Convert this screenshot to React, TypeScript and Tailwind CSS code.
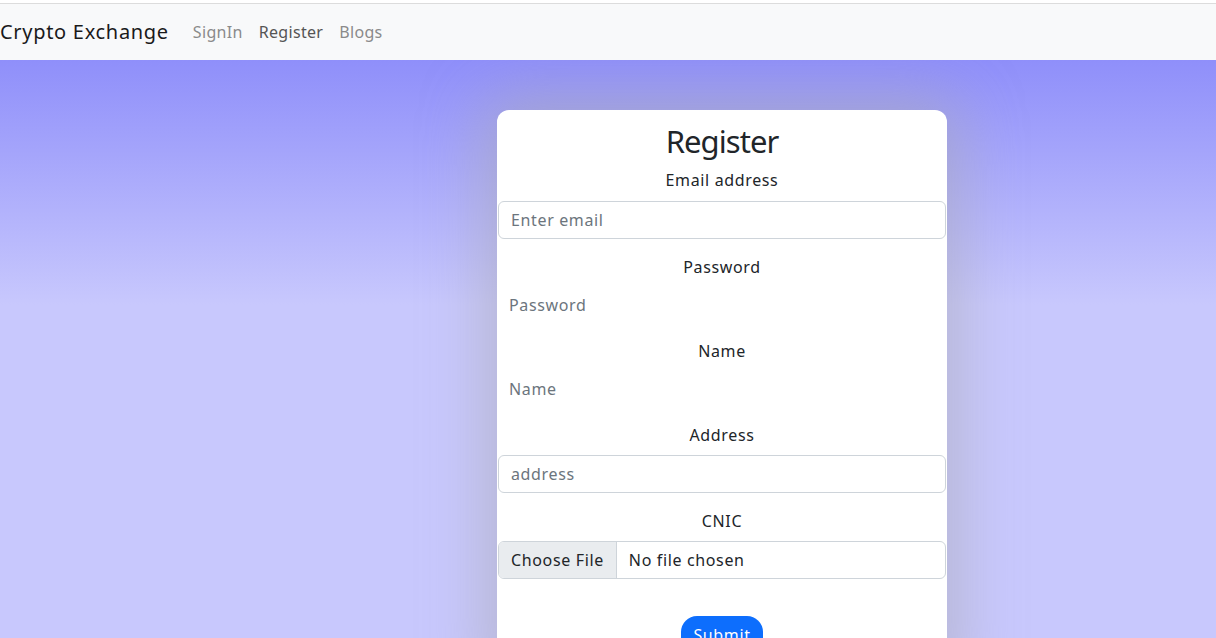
import React from "react";

export default function App() {
  const font = { fontFamily: '"Noto Sans", "Open Sans", sans-serif' };
  return (
    <div className="min-h-[638px] w-full bg-white tracking-[0.04em] text-[#212529]" style={font}>
      <div className="h-[3px] bg-white" />
      <div className="h-px bg-[#dcdcdc]" />
      <nav className="flex h-[56px] items-center bg-[#f8f9fa] pb-px">
        <span className="mr-4 text-[20px] tracking-[0.035em] text-[#1a1a1a]">Crypto Exchange</span>
        <span className="px-2 text-[16px] tracking-[0.02em] text-[#8a8a8a]">SignIn</span>
        <span className="px-2 text-[16px] tracking-[0.02em] text-[#555555]">Register</span>
        <span className="px-2 text-[16px] tracking-[0.02em] text-[#8a8a8a]">Blogs</span>
      </nav>
      <main className="h-[578px] overflow-hidden bg-[linear-gradient(to_bottom,#8f8ffa_0px,#c8c8fd_245px,#c8c8fd_100%)] pt-[50px]">
        <div className="ml-[497px] w-[450px] rounded-[12px] bg-white pt-[12px] pb-6 text-center shadow-[0_0_60px_12px_rgba(170,170,180,0.6)]">
          <h2 className="mb-2 text-[31px] leading-[38px] tracking-[-0.03em] text-[#212529]">Register</h2>
          <div className="mb-[9px] text-[16px] leading-6">Email address</div>
          <div className="mb-4 px-px">
            <div className="flex h-[38px] items-center rounded-[6px] border border-[#ced4da] px-3 pb-px text-left text-[16px] text-[#6c757d]">Enter email</div>
          </div>
          <div className="mb-2 text-[16px] leading-6">Password</div>
          <div className="mb-4 flex h-[36px] items-center px-3 pb-px text-left text-[16px] text-[#6c757d]">Password</div>
          <div className="mb-2 text-[16px] leading-6">Name</div>
          <div className="mb-4 flex h-[36px] items-center px-3 pb-px text-left text-[16px] text-[#6c757d]">Name</div>
          <div className="mb-2 text-[16px] leading-6">Address</div>
          <div className="mb-4 px-px">
            <div className="flex h-[38px] items-center rounded-[6px] border border-[#ced4da] px-3 pb-px text-left text-[16px] text-[#6c757d]">address</div>
          </div>
          <div className="mb-2 text-[16px] leading-6">CNIC</div>
          <div className="px-px">
            <div className="flex h-[38px] items-stretch overflow-hidden rounded-[6px] border border-[#ced4da] text-left text-[16px] text-[#212529]">
              <div className="flex items-center border-r border-[#ced4da] bg-[#e9ecef] px-3 pb-px">Choose File</div>
              <div className="flex items-center px-3 pb-px">No file chosen</div>
            </div>
          </div>
          <div className="mt-[37px] flex justify-center">
            <button className="h-[38px] rounded-[16px] bg-[#0d6efd] px-3 text-[16px] tracking-[0.04em] text-white">Submit</button>
          </div>
        </div>
      </main>
    </div>
  );
}
